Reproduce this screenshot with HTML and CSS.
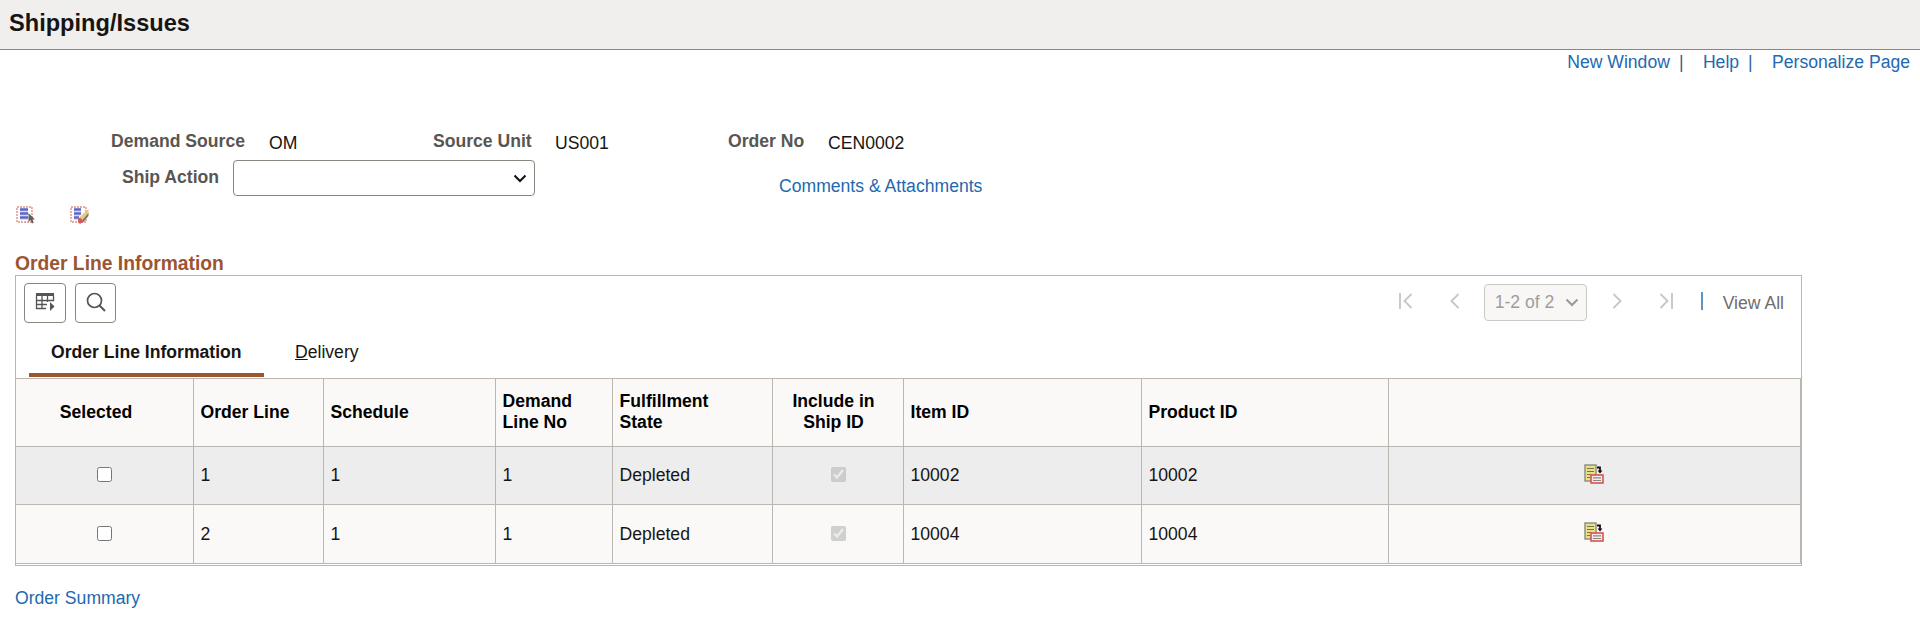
FILE: index.html
```
<!DOCTYPE html>
<html lang="en">
<head>
    <meta charset="UTF-8">
    <meta name="viewport" content="width=device-width, initial-scale=1.0">
    <title>Shipping/Issues</title>
    <link rel="stylesheet" href="styles.css">
</head>
<body>
    <header class="page-header">
        <h1>Shipping/Issues</h1>
    </header>
    <nav class="page-links">
        <a href="#" class="link">New Window</a><span class="bar">|</span>
        <a href="#" class="link">Help</a><span class="bar">|</span>
        <a href="#" class="link">Personalize Page</a>
    </nav>

    <main>
        <div class="fields">
            <span class="label demand">Demand Source</span><span class="value demand-value">OM</span>
            <span class="label unit">Source Unit</span><span class="value unit-value">US001</span>
            <span class="label order">Order No</span><span class="value order-value">CEN0002</span>
        </div>
        <div class="action-row">
            <label class="label action" for="shipAction">Ship Action</label>
            <div class="select-wrap">
                <select id="shipAction" class="ship-select"><option></option></select>
                <svg class="select-arrow" width="14" height="9" viewBox="0 0 14 9"><path d="M1.5 1.5L7 7l5.5-5.5" fill="none" stroke="#111" stroke-width="2"/></svg>
            </div>
            <a href="#" class="link comments">Comments &amp; Attachments</a>
        </div>

        <div class="line-tools">
            <!-- select all -->
            <svg width="19" height="18" viewBox="0 0 19 18">
                <rect x="1" y="1" width="15" height="15" fill="#fff" stroke="#e58e80" stroke-width="1.4" stroke-dasharray="2 1"/>
                <path d="M4 3.5h8M4 7.5h8M4 11.5h8" stroke="#5b62c8" stroke-width="2.4"/>
                <path d="M4 5.5h8M4 9.5h8M4 13.5h8" stroke="#d5d6f3" stroke-width="1"/>
                <path d="M12.5 7v9l2-2 1.5 3.500 1.800-1-1.500-3h2.700z" fill="#5e5e5e"/>
            </svg>
            <!-- clear all -->
            <svg width="19" height="18" viewBox="0 0 19 18">
                <rect x="1" y="1" width="15" height="15" fill="#fff" stroke="#e58e80" stroke-width="1.4" stroke-dasharray="2 1"/>
                <path d="M4 3.5h7M4 7.5h7M4 11.5h5" stroke="#5b62c8" stroke-width="2.4"/>
                <path d="M4 5.5h7M4 9.5h6M4 13.5h4" stroke="#d5d6f3" stroke-width="1"/>
                <path d="M18.500 3v5l-6 7-3-4z" fill="#e8cb80"/>
                <path d="M18.500 7v3l-6 7-1-2z" fill="#777"/>
                <path d="M8 13l2-1.500 3 3-1 2-2 1.500-2-2z" fill="#d95757"/>
            </svg>
        </div>

        <h2>Order Line Information</h2>
        <section class="grid-box">
            <div class="toolbar">
                <button class="tool-btn grid-btn" aria-label="Grid actions">
                    <svg width="20" height="20" viewBox="0 0 20 20">
                        <path d="M1 1h18v3H1z" fill="#555"/>
                        <path d="M1.500 3v13.500H11M7 3v13.500M12.500 3v7M18.500 3v5.500H1M1 12.500h11" fill="none" stroke="#555" stroke-width="1.300"/>
                        <path d="M15 10v9l4.500-4.500z" fill="#555"/>
                    </svg>
                </button>
                <button class="tool-btn" aria-label="Find">
                    <svg width="20" height="20" viewBox="0 0 20 20"><circle cx="8.500" cy="8.500" r="7" fill="none" stroke="#555" stroke-width="1.700"/><path d="M13.500 13.500l5.500 5.500" stroke="#555" stroke-width="1.900"/></svg>
                </button>
                <div class="pager">
                    <svg class="first" width="14" height="16" viewBox="0 0 14 16"><path d="M1 0v16M12.500 1L5.500 8l7 7" fill="none" stroke="#c8c8c8" stroke-width="1.900"/></svg>
                    <svg class="prev" width="10" height="16" viewBox="0 0 10 16"><path d="M8.500 1l-7 7 7 7" fill="none" stroke="#c8c8c8" stroke-width="1.900"/></svg>
                    <div class="range">1-2 of 2
                        <svg width="14" height="9" viewBox="0 0 14 9"><path d="M1.500 1.500L7 7l5.500-5.500" fill="none" stroke="#999" stroke-width="2"/></svg>
                    </div>
                    <svg class="next" width="10" height="16" viewBox="0 0 10 16"><path d="M1.500 1l7 7-7 7" fill="none" stroke="#c8c8c8" stroke-width="1.900"/></svg>
                    <svg class="last" width="14" height="16" viewBox="0 0 14 16"><path d="M13 0v16M1.500 1l7 7-7 7" fill="none" stroke="#c8c8c8" stroke-width="1.900"/></svg>
                    <span class="divider"></span>
                    <span class="view-all">View All</span>
                </div>
            </div>
            <div class="tabs">
                <div class="tab active"><span>Order Line Information</span></div>
                <div class="tab"><span><u>D</u>elivery</span></div>
            </div>
            <table>
                <colgroup>
                    <col class="c1"><col class="c2"><col class="c3"><col class="c4"><col class="c5"><col class="c6"><col class="c7"><col class="c8"><col class="c9">
                </colgroup>
                <tr class="head">
                    <th class="center selected">Selected</th>
                    <th>Order Line</th>
                    <th>Schedule</th>
                    <th class="two-line">Demand<br>Line No</th>
                    <th class="two-line">Fulfillment<br>State</th>
                    <th class="center two-line">Include in<br>Ship ID</th>
                    <th>Item ID</th>
                    <th>Product ID</th>
                    <th></th>
                </tr>
                <tr class="odd">
                    <td class="center"><input type="checkbox"></td>
                    <td>1</td>
                    <td>1</td>
                    <td>1</td>
                    <td>Depleted</td>
                    <td class="center"><input type="checkbox" checked disabled></td>
                    <td>10002</td>
                    <td>10002</td>
                    <td class="center detail"><svg width="20" height="20" viewBox="0 0 20 20"><use href="#detail"/></svg></td>
                </tr>
                <tr class="even">
                    <td class="center"><input type="checkbox"></td>
                    <td>2</td>
                    <td>1</td>
                    <td>1</td>
                    <td>Depleted</td>
                    <td class="center"><input type="checkbox" checked disabled></td>
                    <td>10004</td>
                    <td>10004</td>
                    <td class="center detail"><svg width="20" height="20" viewBox="0 0 20 20"><use href="#detail"/></svg></td>
                </tr>
            </table>
        </section>
        <a href="#" class="link summary">Order Summary</a>
    </main>

    <svg class="defs" width="0" height="0">
        <symbol id="detail" viewBox="0 0 20 20">
            <rect x="1" y="1" width="11" height="16" fill="#e6df8c" stroke="#8a8a80" stroke-width="1.400"/>
            <path d="M3 4.500h7M3 7.500h7M3 10.500h4M3 13.500h3" stroke="#77744c" stroke-width="1.200"/>
            <path d="M13 3.500h3v4" fill="none" stroke="#111" stroke-width="1.800"/>
            <path d="M13.500 6.500h5L16 9.500z" fill="#111"/>
            <rect x="7" y="11" width="12" height="8" fill="#f5e9e9" stroke="#d9534f" stroke-width="1.600"/>
            <path d="M9 13.800h8M9 16.500h8" stroke="#888" stroke-width="1.200"/>
        </symbol>
    </svg>
</body>
</html>
```
FILE: styles.css
```
* {
    box-sizing: border-box;
}
body {
    margin: 0;
    font-family: "Liberation Sans", Arial, sans-serif;
    font-size: 17.6px;
    line-height: 21px;
    color: #161513;
    background: #fff;
}
svg {
    display: block;
    flex: none;
}
.defs {
    position: absolute;
}
.link {
    color: #2269b0;
    text-decoration: none;
    white-space: nowrap;
}
/* page header */
.page-header {
    height: 50px;
    padding: 9px 9px 0;
    background: #f0efed;
    border-bottom: 1px solid #8b8580;
}
h1 {
    margin: 0;
    font-size: 23.6px;
    line-height: 28px;
}
.page-links {
    display: flex;
    justify-content: flex-end;
    height: 77px;
    padding: 2px 10px 0 0;
    color: #2f5f92;
}
.bar {
    width: 5px;
    margin: 0 19px 0 9px;
}
main {
    padding: 0 15px;
}
/* search keys */
.fields {
    display: flex;
    height: 33px;
    padding-top: 4px;
}
.label {
    flex: none;
    font-weight: bold;
    color: #595652;
}
.value {
    flex: none;
    padding-top: 2px;
}
.demand {
    width: 254px;
    padding-left: 96px;
}
.demand-value {
    width: 164px;
}
.unit {
    width: 122px;
}
.unit-value {
    width: 173px;
}
.order {
    width: 100px;
}
.action-row {
    display: flex;
    height: 46px;
}
.action {
    width: 218px;
    padding: 7px 0 0 107px;
}
.select-wrap {
    position: relative;
    width: 302px;
    height: 36px;
}
.ship-select {
    width: 302px;
    height: 36px;
    background: #fff;
    border: 1px solid #8b8580;
    border-radius: 4px;
    appearance: none;
}
.select-arrow {
    position: absolute;
    top: 14px;
    right: 8px;
}
.comments {
    margin: 16px 0 0 244px;
}
.line-tools {
    display: flex;
    gap: 35px;
    height: 47px;
    padding-left: 1px;
}
h2 {
    height: 22px;
    margin: 0;
    font-size: 19.3px;
    line-height: 22px;
    color: #9c5531;
}
/* order line grid */
.grid-box {
    width: 1787px;
    height: 291px;
    border: 1px solid #bcb6b1;
}
.toolbar {
    display: flex;
    gap: 9px;
    height: 54px;
    padding: 7px 0 0 8px;
}
.tool-btn {
    display: flex;
    align-items: center;
    justify-content: center;
    width: 41px;
    height: 40px;
    padding: 0 0 2px;
    background: #fff;
    border: 1px solid #8b8580;
    border-radius: 4px;
}
.grid-btn {
    width: 42px;
}
.pager {
    display: flex;
    align-items: flex-start;
    margin-left: auto;
    margin-right: 17px;
}
.first, .prev, .next, .last {
    margin-top: 10px;
}
.first {
    margin-right: 37px;
}
.range {
    display: flex;
    align-items: center;
    justify-content: space-between;
    width: 103px;
    height: 37px;
    margin: 1px 25px 0 24px;
    padding: 0 7px 0 10px;
    background: #f8f7f5;
    border: 1px solid #ccc9c5;
    border-radius: 4px;
    color: #a09e9b;
    white-space: nowrap;
}
.last {
    margin-left: 37px;
}
.divider {
    width: 2px;
    height: 18px;
    margin: 9px 20px 0 28px;
    background: #5c94c4;
}
.view-all {
    margin-top: 10px;
    color: #6f6d6a;
    white-space: nowrap;
}
.tabs {
    display: flex;
    height: 48px;
    padding-left: 13px;
}
.tab {
    height: 47px;
    padding: 12px 31px 0;
}
.active {
    width: 235px;
    padding: 12px 0 0 22px;
    border-bottom: 4px solid #9c5531;
    font-weight: bold;
    white-space: nowrap;
}
table {
    width: 1786px;
    margin-left: -1px;
    table-layout: fixed;
    border-collapse: collapse;
}
th, td {
    padding: 0 0 0 6.5px;
    border: 1px solid #bcb6b1;
    text-align: left;
    vertical-align: middle;
}
th {
    color: #000;
}
.center {
    padding: 0 0 2px;
    text-align: center;
}
th.center {
    padding: 0 9px 0 0;
}
th.selected {
    padding-right: 17px;
}
th.two-line {
    padding-bottom: 2px;
}
td.detail {
    padding: 0 2px 4px 0;
}
.head {
    height: 68px;
    background: #faf9f7;
}
.odd {
    height: 58px;
    background: #ededed;
}
.even {
    height: 59px;
    background: #faf9f7;
}
.c1 { width: 178px; }
.c2 { width: 130px; }
.c3 { width: 172px; }
.c4 { width: 117px; }
.c5 { width: 160px; }
.c6 { width: 131px; }
.c7 { width: 238px; }
.c8 { width: 247px; }
.c9 { width: 412px; }
td svg {
    margin: 0 auto;
}
input[type="checkbox"] {
    display: block;
    width: 15px;
    height: 15px;
    margin: 0 auto;
}
.summary {
    display: inline-block;
    margin-top: 22px;
}
```
